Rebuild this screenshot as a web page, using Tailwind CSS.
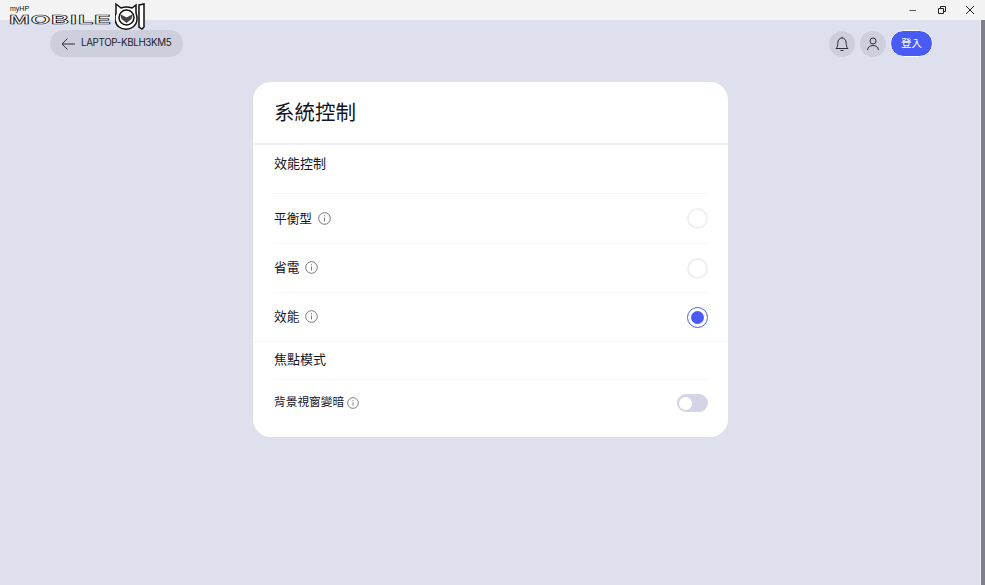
<!DOCTYPE html>
<html lang="zh-Hant">
<head>
  <meta charset="UTF-8" />
  <title>系統控制</title>
  <script src="https://cdn.jsdelivr.net/npm/@tailwindcss/browser@4"></script>
</head>
<body class="h-[585px] w-[985px] overflow-hidden bg-[#dee0ee] font-['Inter','Noto_Sans_CJK_TC',sans-serif] text-[#14161f]">
  <!-- Title bar -->
  <div class="flex h-[20px] items-center justify-end bg-[#f3f3f3] text-[#222]">
    <div class="flex w-[29px] justify-center">
      <svg width="10" height="10" viewBox="0 0 10 10" fill="none" stroke="#555"><path d="M1.500 5.500h6.500" /></svg>
    </div>
    <div class="flex w-[29px] justify-center">
      <svg width="10" height="10" viewBox="0 0 10 10" fill="none" stroke="currentColor"><path d="M1.500 3.500h5v5h-5zM3.500 3.500v-2h5v5h-2" /></svg>
    </div>
    <div class="flex w-[29px] justify-center pr-[1px]">
      <svg width="10" height="10" viewBox="0 0 10 10" fill="none" stroke="currentColor"><path d="M1 1l8 8M9 1l-8 8" /></svg>
    </div>
  </div>

  <div class="relative h-[565px]">
    <!-- Scrollbar -->
    <div class="absolute right-0 top-0 h-full w-[5px] border-l border-[#eceDf5] bg-[#7f7f8c]"></div>

    <!-- Top row -->
    <div class="flex items-center justify-between pl-[50px] pr-[52px] pt-[10px]">
      <div class="flex h-[27px] w-[133px] items-center gap-[6px] rounded-full bg-[#cdcfdc] pl-[11px]">
        <svg width="14" height="14" viewBox="0 0 14 14" fill="none" stroke="#333" stroke-width="1"><path d="M14 7H1M6.500 1.500L1 7l5.500 5.500" /></svg>
        <span class="text-[9.800px] tracking-[-0.35px] text-[#22242f]">LAPTOP-KBLH3KM5</span>
      </div>
      <div class="flex items-center">
        <div class="flex h-[26px] w-[26px] items-center justify-center rounded-full bg-[#cdcfdc]">
          <svg width="14" height="16" viewBox="0 0 14 16" fill="none" stroke="#2b2d3a" stroke-width="1"><path d="M1 12.500h12c-1.500-1.500-1.800-3-1.800-5.500 0-3-1.800-5-4.200-5S2.800 4 2.800 7c0 2.500-.3 4-1.800 5.500zM5.500 14.500h3M7 2V.8" /></svg>
        </div>
        <div class="ml-[5px] flex h-[26px] w-[26px] items-center justify-center rounded-full bg-[#cdcfdc]">
          <svg width="14" height="14" viewBox="0 0 14 14" fill="none" stroke="#2b2d3a" stroke-width="1"><circle cx="7" cy="4" r="3" /><path d="M1.500 13c.5-3 2.500-4.500 5.500-4.500s5 1.500 5.500 4.500" /></svg>
        </div>
        <div class="ml-[4px] flex h-[27px] w-[43px] items-center justify-center rounded-full border border-white bg-[#4a5af4] text-[10.500px] text-white">登入</div>
      </div>
    </div>

    <!-- Card -->
    <div class="ml-[253px] mt-[25px] h-[355px] w-[475px] rounded-[18px] bg-white">
      <div class="flex h-[63px] items-center border-b-2 border-[#f1f2f6] pl-[21px] pr-[20px] pt-[2px] text-[20.500px]">系統控制</div>
      <div class="px-[20px]">
        <div class="h-[49px] border-b border-[#f5f5f8] pl-[1px] pt-[9px] text-[13px]">效能控制</div>
        <div class="flex h-[50px] items-center justify-between border-b border-[#f5f5f8] text-[12.700px]">
          <div class="flex items-center gap-[6px] pl-[1px]">平衡型
            <svg width="13" height="13" viewBox="0 0 13 13" fill="none" stroke="#555" stroke-width="0.800"><circle cx="6.500" cy="6.500" r="5.800" /><path d="M6.500 5.600v3.800M6.500 3.300v1.100" /></svg>
          </div>
          <div class="h-[21px] w-[21px] rounded-full border-2 border-[#efeff2]"></div>
        </div>
        <div class="flex h-[49px] items-center justify-between border-b border-[#f5f5f8] text-[12.700px]">
          <div class="flex items-center gap-[6px] pl-[1px]">省電
            <svg width="13" height="13" viewBox="0 0 13 13" fill="none" stroke="#555" stroke-width="0.800"><circle cx="6.500" cy="6.500" r="5.800" /><path d="M6.500 5.600v3.800M6.500 3.300v1.100" /></svg>
          </div>
          <div class="h-[21px] w-[21px] rounded-full border-2 border-[#efeff2]"></div>
        </div>
        <div class="flex h-[48px] items-center justify-between text-[12.700px]">
          <div class="flex items-center gap-[6px] pl-[1px]">效能
            <svg width="13" height="13" viewBox="0 0 13 13" fill="none" stroke="#555" stroke-width="0.800"><circle cx="6.500" cy="6.500" r="5.800" /><path d="M6.500 5.600v3.800M6.500 3.300v1.100" /></svg>
          </div>
          <div class="flex h-[21px] w-[21px] items-center justify-center rounded-full border border-[#4a5af4]">
            <div class="h-[13px] w-[13px] rounded-full bg-[#4a5af4]"></div>
          </div>
        </div>
      </div>
      <div class="border-t border-[#f5f5f8]">
        <div class="mx-[20px] h-[38px] border-b border-[#f5f5f8] pl-[1px] pt-[8px] text-[13px]">焦點模式</div>
        <div class="mx-[20px] flex h-[46px] items-center justify-between text-[11.700px]">
          <div class="flex items-center gap-[3px] pl-[1px]">背景視窗變暗
            <svg width="12" height="12" viewBox="0 0 13 13" fill="none" stroke="#555" stroke-width="0.800"><circle cx="6.500" cy="6.500" r="5.800" /><path d="M6.500 5.600v3.800M6.500 3.300v1.100" /></svg>
          </div>
          <div class="flex h-[18px] w-[31px] items-center rounded-full bg-[#d3d4e6] pl-[2px]">
            <div class="h-[13px] w-[13px] rounded-full bg-white"></div>
          </div>
        </div>
      </div>
    </div>
  </div>

  <!-- Logo overlay -->
  <div class="absolute left-0 top-0 h-[32px] w-[150px]">
    <span class="absolute left-[10px] top-[6px] h-[6px] font-['Liberation_Sans',sans-serif] text-[7px] leading-[6px] text-[#111]">myHP</span>
    <span class="absolute left-[9px] top-[14px] h-[11px] origin-left font-['Liberation_Sans',sans-serif] text-[13.500px] font-bold leading-[11px] tracking-[0.5px] text-white [-webkit-text-stroke:0.6px_#111] [transform:scaleX(1.85)]">MOBILE</span>
    <svg class="absolute left-[115px] top-[2px]" width="31" height="29" viewBox="0 0 31 29">
      <path d="M1 2l5 4c3-1 8-1 11 0l4-3v8c2 6 1 11-3 14-4 3-10 3-14 0C0 22-1 16 1 11z" fill="#fff" stroke="#111" stroke-width="1.500" />
      <circle cx="11.500" cy="15.500" r="7.500" fill="#fff" stroke="#111" stroke-width="1.500" />
      <path d="M5 12l6.500 3.500L18 12l-1.500 5-5 4-5-4z" fill="#444" />
      <path d="M24 3l5-1v23l-2 2-3-2z" fill="#fff" stroke="#111" stroke-width="1.500" />
    </svg>
  </div>
</body>
</html>
